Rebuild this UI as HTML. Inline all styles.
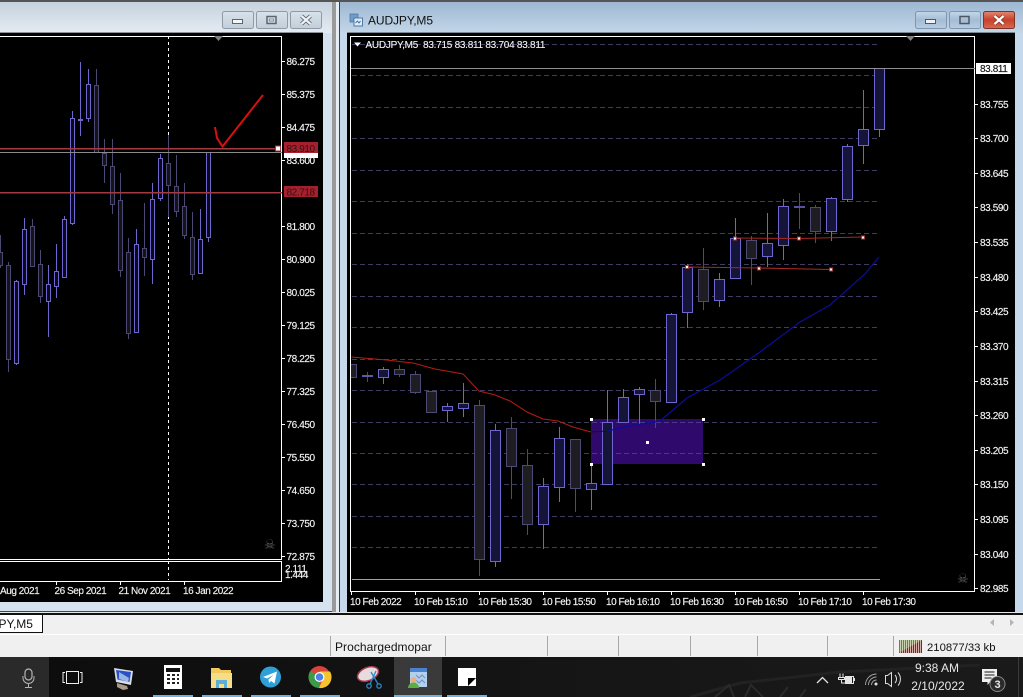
<!DOCTYPE html>
<html><head><meta charset="utf-8"><style>
html,body{margin:0;padding:0;background:#000;width:1023px;height:697px;overflow:hidden}
svg{display:block}
text{font-family:"Liberation Sans",sans-serif}
.a{font-size:10px;fill:#f4f4f4;letter-spacing:-.4px;stroke:#f4f4f4;stroke-width:.15}
.t{font-size:10px;fill:#f4f4f4;letter-spacing:-.45px;stroke:#f4f4f4;stroke-width:.15}
</style></head><body>
<svg width="1023" height="697" viewBox="0 0 1023 697" xmlns="http://www.w3.org/2000/svg">
<defs>
<linearGradient id="g1" x1="0" y1="0" x2="0" y2="1"><stop offset="0" stop-color="#c6d2de"/><stop offset="1" stop-color="#e4ebf2"/></linearGradient>
<linearGradient id="g2" x1="0" y1="0" x2="0" y2="1"><stop offset="0" stop-color="#9db7d2"/><stop offset="1" stop-color="#c4d6e9"/></linearGradient>
<linearGradient id="b1" x1="0" y1="0" x2="0" y2="1"><stop offset="0" stop-color="#d8e2ea"/><stop offset="1" stop-color="#c2ced9"/></linearGradient>
<linearGradient id="b2" x1="0" y1="0" x2="0" y2="1"><stop offset="0" stop-color="#c4d7ea"/><stop offset=".5" stop-color="#a4bcd4"/><stop offset="1" stop-color="#b8cde2"/></linearGradient>
<linearGradient id="b3" x1="0" y1="0" x2="0" y2="1"><stop offset="0" stop-color="#e08a74"/><stop offset=".5" stop-color="#c8402a"/><stop offset="1" stop-color="#d86a50"/></linearGradient>
<linearGradient id="tb" x1="0" y1="0" x2="1" y2="0"><stop offset="0" stop-color="#0c0c0c"/><stop offset=".6" stop-color="#161616"/><stop offset="1" stop-color="#1a1a1a"/></linearGradient>
<clipPath id="cl"><rect x="0" y="36" width="282" height="524"/></clipPath>
<clipPath id="cr"><rect x="351" y="36" width="624" height="556"/></clipPath>
</defs>

<!-- screen background -->
<rect width="1023" height="697" fill="#d6e4f2"/>
<rect width="1023" height="2" fill="#555"/>

<!-- LEFT WINDOW -->
<rect x="0" y="2" width="332" height="31" fill="url(#g1)"/>
<rect x="0" y="32" width="323" height="1" fill="#8c9298"/>
<rect x="0" y="33" width="323" height="569" fill="#000"/>
<rect x="323" y="33" width="9" height="579" fill="#d5e3f0"/>
<rect x="0" y="602" width="332" height="9" fill="#d5e3f0"/>
<rect x="0" y="611" width="336" height="1" fill="#444"/>
<rect x="332" y="2" width="4" height="610" fill="#9a9a9a"/>
<rect x="336" y="2" width="3" height="610" fill="#e6edf4"/>
<rect x="339" y="2" width="1" height="610" fill="#3c3c3c"/>
<g stroke="#8f9aa6" fill="url(#b1)">
<rect x="222.5" y="11.5" width="31" height="17" rx="2"/>
<rect x="256.5" y="11.5" width="31" height="17" rx="2"/>
<rect x="290.5" y="11.5" width="31" height="17" rx="2"/>
</g>
<rect x="232.5" y="19.5" width="10" height="4" fill="#f4f6f8" stroke="#5c6670"/>
<rect x="267" y="16.5" width="9" height="7" fill="none" stroke="#5c6670" stroke-width="1.5"/>
<rect x="269.5" y="19" width="4" height="2" fill="#e8edf2" stroke="#5c6670" stroke-width=".6"/>
<path d="M301.5 16l9 8M310.5 16l-9 8" stroke="#5c6670" stroke-width="4"/>
<path d="M301.5 16l9 8M310.5 16l-9 8" stroke="#eef2f6" stroke-width="2.2"/>

<!-- left chart frame -->
<path d="M0 36.5H281.5V559.5H0M0 561.5H281.5V581.5H0" fill="none" stroke="#fff"/>
<g clip-path="url(#cl)">
<path d="M168.5 36V560" stroke="#fff" stroke-dasharray="3 3"/>
<path d="M.5 235V268M8.5 262V372M32.5 219V267M40.5 250V303M96.5 69V152M104.5 139V183M112.5 139V214M120.5 173V277M128.5 238V339M144.5 203V276M168.5 135V217M176.5 155V217M184.5 183V239M192.5 212V280" stroke="#4c4874" fill="none"/>
<path d="M16.5 280V365M24.5 218V295M48.5 265V337M56.5 244V298M64.5 216V277M72.5 111V225M80.5 62V136M88.5 69V122M136.5 229V333M152.5 183V284M160.5 154V201M200.5 209V274M208.5 152V242" stroke="#6e66cc" fill="none"/>
<path d="M0 252.5H2.5V265.5H0M6.5 265.5h4v94h-4zM30.5 226.5h4v40h-4zM38.5 264.5h4v32h-4zM94.5 85.5h4v67h-4zM102.5 153.5h4v12h-4zM110.5 166.5h4v38h-4zM118.5 200.5h4v70h-4zM126.5 252.5h4v81h-4zM142.5 248.5h4v9h-4zM166.5 163.5h4v22h-4zM174.5 186.5h4v25h-4zM182.5 206.5h4v29h-4zM190.5 237.5h4v37h-4z" fill="#141418" stroke="#4c4874"/>
<path d="M14.5 281.5h4v82h-4zM22.5 229.5h4v55h-4zM46.5 284.5h4v17h-4zM54.5 271.5h4v15h-4zM62.5 219.5h4v58h-4zM70.5 118.5h4v105h-4zM86.5 84.5h4v34h-4zM134.5 244.5h4v88h-4zM150.5 199.5h4v60h-4zM158.5 158.5h4v40h-4zM198.5 239.5h4v34h-4zM206.5 152.5h4v85h-4z" fill="#0a0a18" stroke="#6e66cc"/>
<rect x="78" y="119" width="5" height="2" fill="#6e66cc"/>
</g>
<path d="M168.5 561V580" stroke="#fff" stroke-dasharray="3 3"/>
<rect x="0" y="148" width="278" height="1.5" fill="#a33a40"/>
<rect x="0" y="152" width="282" height="1" fill="#8a8a8a"/>
<rect x="0" y="192" width="282" height="1.5" fill="#a33a40"/>
<rect x="275.5" y="146" width="5" height="5" fill="#fff" stroke="#a33a40"/>
<path d="M215 127L217 138L222.5 146.5L263 95" fill="none" stroke="#d81010" stroke-width="2"/>
<path d="M214 36h9l-4.500 5z" fill="#808080"/>
<text x="264" y="549" style="font-family:'DejaVu Sans',sans-serif;font-size:13px" fill="#5e5e5e">☠</text>
<path d="M282 61.500h3M282 94.500h3M282 127.500h3M282 160.500h3M282 226.500h3M282 259.500h3M282 292.500h3M282 325.500h3M282 358.500h3M282 391.500h3M282 424.500h3M282 457.500h3M282 490.500h3M282 523.500h3M282 556.500h3M56.500 582v3M120.500 582v3M184.500 582v3" stroke="#fff"/>
<g class="a">
<text class="a" x="286.500" y="65">86.275</text><text class="a" x="286.500" y="98">85.375</text><text class="a" x="286.500" y="131">84.475</text>
<text class="a" x="286.500" y="164">83.600</text><text class="a" x="286.500" y="230">81.800</text><text class="a" x="286.500" y="263">80.900</text>
<text class="a" x="286.500" y="296">80.025</text><text class="a" x="286.500" y="329">79.125</text><text class="a" x="286.500" y="362">78.225</text>
<text class="a" x="286.500" y="395">77.325</text><text class="a" x="286.500" y="428">76.450</text><text class="a" x="286.500" y="461">75.550</text>
<text class="a" x="286.500" y="494">74.650</text><text class="a" x="286.500" y="527">73.750</text><text class="a" x="286.500" y="560">72.875</text>
<text class="a" x="285" y="572">2.111</text><text class="a" x="285" y="578">1.444</text>
</g>
<rect x="284" y="153" width="34" height="5" fill="#fff"/>
<rect x="284" y="142" width="34" height="11" fill="#a3202c"/>
<rect x="284" y="186" width="34" height="11" fill="#a3202c"/>
<text class="a" x="286.500" y="152" style="fill:#3a0f12;stroke:none">83.910</text>
<text class="a" x="286.500" y="195.500" style="fill:#3a0f12;stroke:none">82.718</text>
<text class="t" x="0" y="594">Aug 2021</text><text class="t" x="54.500" y="594">26 Sep 2021</text><text class="t" x="118.500" y="594">21 Nov 2021</text><text class="t" x="183" y="594">16 Jan 2022</text>

<!-- RIGHT WINDOW -->
<rect x="340" y="2" width="683" height="31" fill="url(#g2)"/>
<rect x="340" y="33" width="7" height="579" fill="#c6d9ec"/>
<rect x="347" y="32" width="668" height="1" fill="#7c8894"/>
<rect x="347" y="33" width="668" height="579" fill="#000"/>
<rect x="1015" y="33" width="8" height="579" fill="#c6d9ec"/>
<g stroke="#7f96ad">
<rect x="915.500" y="11.500" width="31" height="17" rx="2" fill="url(#b2)"/>
<rect x="949.500" y="11.500" width="31" height="17" rx="2" fill="url(#b2)"/>
</g>
<rect x="983.500" y="11.500" width="31" height="17" rx="2" fill="url(#b3)" stroke="#7c3528"/>
<rect x="925.500" y="19.500" width="10" height="4" fill="#eef2f6" stroke="#4c5866"/>
<rect x="960" y="16.500" width="9" height="7" fill="none" stroke="#4c5866" stroke-width="1.500"/>
<path d="M994.500 16l9 8M1003.500 16l-9 8" stroke="#8a3a2c" stroke-width="4"/>
<path d="M994.500 16l9 8M1003.500 16l-9 8" stroke="#fff" stroke-width="2.200"/>
<!-- window icon -->
<rect x="350" y="14" width="8" height="8" fill="#6f9bc8" stroke="#4d7aa8" stroke-width=".8"/>
<rect x="354" y="18" width="8.500" height="8" fill="#dfeaf5" stroke="#4d7aa8"/>
<path d="M355.500 23l2-2 1.500 2 1.500-2" stroke="#2a5a8c" fill="none" stroke-width=".8"/>
<text x="368" y="24.500" style="font-size:12px;letter-spacing:-.1px" fill="#111">AUDJPY,M5</text>

<!-- right chart -->
<rect x="350.500" y="36.500" width="624" height="555" fill="#000" stroke="#fff"/>
<path d="M352 44.500H880M352 75.500H880M352 107.500H880M352 138.500H880M352 170.500H880M352 201.500H880M352 233.500H880M352 264.500H880M352 296.500H880M352 327.500H880M352 359.500H880M352 390.500H880M352 422.500H880M352 453.500H880M352 484.500H880M352 516.500H880M352 547.500H880" stroke="#3f3c5e" stroke-dasharray="5 3"/>
<rect x="591" y="419" width="112" height="45" fill="#2f0a6c"/>
<path d="M592 422.500H703M592 453.500H703" stroke="#4b3a86" stroke-dasharray="5 3"/>
<g clip-path="url(#cr)">
<path d="M351.500 364V377M399.500 365V377M415.500 371V394M431.500 391V412M479.500 400V576M511.500 417V499M527.500 449V535M575.500 439V512M655.500 379V428M703.500 248V310M751.500 236V285M799.500 193V229M815.500 205V243M367.500 372V382" stroke="#4e4a76" fill="none"/>
<path d="M383.500 367V384M447.500 403V422M463.500 383V417M495.500 424V567M543.500 478V549M559.500 427V502M591.500 464V510M607.500 390V484M623.500 389V423M639.500 387V424M671.500 313V403M687.500 264V328M719.500 273V307M735.500 218V279M767.500 213V267M783.500 199V260M831.500 197V241M847.500 144V202M863.500 90V164M879.500 68V137" stroke="#6e66cc" fill="none"/>
<path d="M351 364.500H356.500V377.500H351M394.500 369.500h10v5h-10zM410.500 374.500h10v18h-10zM426.500 391.500h10v21h-10zM474.500 405.500h10v154h-10zM506.500 428.500h10v38h-10zM522.500 465.500h10v59h-10zM570.500 439.500h10v49h-10zM650.500 390.500h10v11h-10zM698.500 269.500h10v32h-10zM746.500 240.500h10v18h-10zM810.500 207.500h10v24h-10z" fill="#1d1d22" stroke="#4e4a76"/>
<path d="M378.500 369.500h10v8h-10zM442.500 406.500h10v4h-10zM458.500 403.500h10v5h-10zM490.500 430.500h10v131h-10zM538.500 486.500h10v38h-10zM554.500 438.500h10v49h-10zM586.500 483.500h10v6h-10zM602.500 422.500h10v62h-10zM618.500 397.500h10v25h-10zM634.500 389.500h10v5h-10zM666.500 314.500h10v88h-10zM682.500 267.500h10v45h-10zM714.500 279.500h10v21h-10zM730.500 238.500h10v40h-10zM762.500 243.500h10v13h-10zM778.500 206.500h10v39h-10zM826.500 198.500h10v33h-10zM842.500 146.500h10v53h-10zM858.500 129.500h10v16h-10zM874.500 68.500h10v61h-10z" fill="#15153a" stroke="#6e66cc"/>
<rect x="362" y="375" width="11" height="2" fill="#6258a8"/><rect x="794" y="206" width="11" height="2" fill="#5850a0"/>
</g>
<polyline points="351.500,357 386.500,360 413,363 435,369 463,374 479,391 495,395 510,401 527,412 543,419 558,421 573,427 591,432" fill="none" stroke="#b81c14"/>
<polyline points="591,432 607,431" fill="none" stroke="#151515"/>
<polyline points="607,431 630,426 660,421 687,398 720,380 760,352 800,322 830,305 865,274 879,257" fill="none" stroke="#0c0c9c" stroke-width="1.200"/>
<polyline points="687,267 759,268 831,269.500" fill="none" stroke="#a82822"/>
<polyline points="735,238 799,238.500 863,237" fill="none" stroke="#a82822"/>
<g fill="#fff" stroke="#a83a3a">
<rect x="685.500" y="265.500" width="3" height="3"/><rect x="757.500" y="267" width="3" height="3"/><rect x="829.500" y="268" width="3" height="3"/>
<rect x="733.500" y="237" width="3" height="3"/><rect x="797.500" y="237" width="3" height="3"/><rect x="861.500" y="236" width="3" height="3"/>
</g>
<g fill="#fff"><rect x="590" y="418" width="3" height="3"/><rect x="702" y="418" width="3" height="3"/><rect x="590" y="463" width="3" height="3"/><rect x="702" y="463" width="3" height="3"/><rect x="646" y="441" width="3" height="3"/></g>
<rect x="351" y="68" width="624" height="1" fill="#8e8e8e"/>
<rect x="352" y="579" width="528" height="1" fill="#c89868"/>
<path d="M906 36h9l-4.500 5z" fill="#808080"/>
<path d="M354 42.500h7l-3.500 4z" fill="#fff"/>
<text x="365.500" y="48" style="font-size:10px;letter-spacing:-.26px;stroke:#f4f4f4;stroke-width:.12" fill="#f4f4f4" xml:space="preserve">AUDJPY,M5  83.715 83.811 83.704 83.811</text>
<text x="957" y="583" style="font-family:'DejaVu Sans',sans-serif;font-size:13px" fill="#5e5e5e">☠</text>
<path d="M975 104.500h3M975 138.500h3M975 173.500h3M975 207.500h3M975 242.500h3M975 277.500h3M975 311.500h3M975 346.500h3M975 381.500h3M975 415.500h3M975 450.500h3M975 484.500h3M975 519.500h3M975 554.500h3M975 588.500h3M351.500 592v3M415.500 592v3M479.500 592v3M543.500 592v3M607.500 592v3M671.500 592v3M735.500 592v3M799.500 592v3M863.500 592v3" stroke="#fff"/>
<rect x="976" y="63" width="35" height="11" fill="#fff"/>
<text class="a" x="980" y="72" style="fill:#111;stroke:#111">83.811</text>
<text class="a" x="980" y="108">83.755</text><text class="a" x="980" y="142">83.700</text><text class="a" x="980" y="177">83.645</text>
<text class="a" x="980" y="211">83.590</text><text class="a" x="980" y="246">83.535</text><text class="a" x="980" y="281">83.480</text>
<text class="a" x="980" y="315">83.425</text><text class="a" x="980" y="350">83.370</text><text class="a" x="980" y="385">83.315</text>
<text class="a" x="980" y="419">83.260</text><text class="a" x="980" y="454">83.205</text><text class="a" x="980" y="488">83.150</text>
<text class="a" x="980" y="523">83.095</text><text class="a" x="980" y="558">83.040</text><text class="a" x="980" y="592">82.985</text>
<text class="t" x="350" y="605">10 Feb 2022</text><text class="t" x="414" y="605">10 Feb 15:10</text><text class="t" x="478" y="605">10 Feb 15:30</text>
<text class="t" x="542" y="605">10 Feb 15:50</text><text class="t" x="606" y="605">10 Feb 16:10</text><text class="t" x="670" y="605">10 Feb 16:30</text>
<text class="t" x="734" y="605">10 Feb 16:50</text><text class="t" x="798" y="605">10 Feb 17:10</text><text class="t" x="862" y="605">10 Feb 17:30</text>

<!-- tab bar -->
<rect x="0" y="612" width="1023" height="1" fill="#e8e8e8"/>
<rect x="0" y="613" width="1023" height="2" fill="#111"/>
<rect x="0" y="615" width="1023" height="19" fill="#f0f0f0"/>
<rect x="-1" y="614.500" width="43.500" height="18" fill="#fff" stroke="#111"/>
<text x="-1.500" y="628" style="font-size:12px" fill="#111">PY,M5</text>
<path d="M994 619v7l-4-3.500zM1010 619v7l4-3.500z" fill="#b4b4b4"/>
<rect x="0" y="634" width="1023" height="1" fill="#fff"/>
<rect x="0" y="635" width="1023" height="22" fill="#f0f0f0"/>
<path d="M330.500 636v20M445.500 636v20M547.500 636v20M618.500 636v20M690.500 636v20M757.500 636v20M827.500 636v20M893.500 636v20" stroke="#a8a8a8"/>
<text x="335" y="651" style="font-size:12px;letter-spacing:.05px" fill="#111">Prochargedmopar</text>
<path d="M899 640h23v13h-23z" fill="#6c8a1c"/>
<path d="M899 653L922 640V653z" fill="#a01808"/>
<path d="M900.500 640v13M902.500 640v13M904.500 640v13M906.500 640v13M908.500 640v13M910.500 640v13M912.500 640v13M914.500 640v13M916.500 640v13M918.500 640v13M920.500 640v13" stroke="#f0f0f0" stroke-width=".7"/>
<text x="927" y="651" style="font-size:11.300px" fill="#111">210877/33 kb</text>

<!-- TASKBAR -->
<rect x="0" y="657" width="1023" height="40" fill="url(#tb)"/>
<rect x="0" y="657" width="49" height="40" fill="#2a2a2a"/>
<path d="M690 697L740 683L840 672L980 665" stroke="#222" stroke-width="3" fill="none"/>
<path d="M715 697l14-12 5 12M745 697l6-12 12 12M780 697l8-10M800 697l6-8" stroke="#2a2a2a" stroke-width="2" fill="none"/>
<rect x="394" y="657" width="48" height="40" fill="#3a3a3a"/>
<g fill="#76b0d8"><rect x="153" y="695" width="40" height="2"/><rect x="202" y="695" width="40" height="2"/><rect x="251" y="695" width="40" height="2"/><rect x="300" y="695" width="40" height="2"/><rect x="394" y="695" width="48" height="2"/><rect x="447" y="695" width="40" height="2"/></g>
<!-- mic -->
<rect x="25" y="669" width="7" height="11" rx="3.500" fill="none" stroke="#b4b4b4" stroke-width="1.200"/>
<path d="M23 676v2a5.500 5.500 0 0 0 11 0v-2M28.500 684v3M25 687.500h7" fill="none" stroke="#b4b4b4"/>
<!-- task view -->
<rect x="66.500" y="671.500" width="12" height="12" fill="none" stroke="#eee"/>
<path d="M65 672.500h-2v10h2M80 672.500h2v10h-2" fill="none" stroke="#eee"/>
<!-- monitor icon -->
<path d="M114 668l19 3-2 14-15-3z" fill="#d8dce4"/>
<path d="M116 670l15 2-1.500 10-12-2.500z" fill="#2a52c8"/>
<path d="M119 672l10 6-1 4-9-3z" fill="#9ab4e4"/>
<path d="M117 683l10 3 1 3-5 1-6-3z" fill="#a89a84"/>
<!-- calculator -->
<rect x="164" y="665" width="18" height="24" fill="#fff"/>
<rect x="166" y="668" width="14" height="4" fill="#111"/>
<path d="M167 675h3M172 675h3M177 675h2M167 679h3M172 679h3M177 679h2M167 683h3M172 683h3M177 683h2" stroke="#222" stroke-width="2"/>
<!-- folder -->
<path d="M211 668h8l2 2h10v18h-20z" fill="#f1c95c"/>
<rect x="211" y="673" width="21" height="15" fill="#f6dd88"/>
<rect x="216" y="680" width="11" height="8" fill="#5cb0d8"/>
<rect x="219" y="684" width="5" height="4" fill="#f6dd88"/>
<!-- telegram -->
<circle cx="270.500" cy="677" r="10.500" fill="#2f9fd8"/>
<path d="M263 677l14-5.500-2.500 12-3.500-2.500-2 2-.5-3.500 5-4.500-6.500 3.500z" fill="#fff"/>
<!-- chrome -->
<circle cx="319.500" cy="677" r="11" fill="#d8443a"/>
<path d="M319.500 677L310 682.500A11 11 0 0 0 319.500 688z" fill="#3c9a48"/>
<path d="M310 671.500A11 11 0 0 0 316 687.500L324 677z" fill="#3c9a48"/>
<path d="M319.500 671.500H330A11 11 0 0 1 319 688L324 677z" fill="#f4c430"/>
<circle cx="319.500" cy="677" r="5" fill="#fff"/><circle cx="319.500" cy="677" r="3.800" fill="#4a80e8"/>
<!-- snip -->
<ellipse cx="368" cy="674" rx="11" ry="6.500" fill="#e6dcde" stroke="#a83a50" stroke-width="1.500" transform="rotate(-22 368 674)"/>
<path d="M371 672l7 12M376 671l-6 13" stroke="#2a88c8" stroke-width="1.300"/>
<circle cx="369" cy="686" r="2.200" fill="none" stroke="#2a88c8" stroke-width="1.300"/><circle cx="379" cy="686" r="2.200" fill="none" stroke="#2a88c8" stroke-width="1.300"/>
<!-- mt4 -->
<rect x="410" y="668" width="17" height="19" fill="#b4cfec"/>
<rect x="410" y="668" width="17" height="4" fill="#4a82d0"/>
<path d="M416 675l3 3 3-3 3 3M416 680l3 3 3-3 3 3" stroke="#6a90c8" fill="none"/>
<circle cx="413.500" cy="680" r="3" fill="#e8b080"/>
<path d="M408 688a5.500 5.500 0 0 1 11 0z" fill="#58b040"/>
<!-- sticky -->
<rect x="458" y="668" width="18" height="18" fill="#fff"/>
<path d="M468 678h8l-8 8z" fill="#000"/>
<!-- tray -->
<path d="M817 683l5.500-5.500 5.500 5.500" fill="none" stroke="#e4e4e4" stroke-width="1.300"/>
<path d="M840 673.500v4M843 673.500v4M838.500 677.500h6v2h-6zM841.500 680v3h5" stroke="#e4e4e4" fill="none"/>
<rect x="845.500" y="676.500" width="8" height="7" fill="none" stroke="#e4e4e4"/><rect x="846" y="677" width="6" height="6" fill="#e4e4e4"/><rect x="854" y="678" width="1" height="3" fill="#e4e4e4"/>
<path d="M865.500 685a11 11 0 0 1 11-11M868.500 685a8 8 0 0 1 8-8M871.500 685a5 5 0 0 1 5-5" fill="none" stroke="#a8a8a8" stroke-width=".9"/>
<circle cx="876" cy="684" r="1.500" fill="#e4e4e4"/>
<path d="M885.500 675.500h2l4-3v14l-4-3h-2z" fill="none" stroke="#dcdcdc"/>
<path d="M895 675a6 6 0 0 1 0 8M898 672.500a10 10 0 0 1 0 13" fill="none" stroke="#dcdcdc"/>
<text x="937" y="672" text-anchor="middle" style="font-size:12px" fill="#e8e8e8">9:38 AM</text>
<text x="938" y="690" text-anchor="middle" style="font-size:12px" fill="#e8e8e8">2/10/2022</text>
<path d="M982 669h15v13h-7l-2.500 3v-3H982z" fill="#f0f0f0"/>
<path d="M984.500 672h10M984.500 675h10M984.500 678h7" stroke="#1a1a1a"/>
<circle cx="997.500" cy="684" r="7.500" fill="#2a2a2a" stroke="#888"/>
<text x="997.500" y="688" text-anchor="middle" style="font-size:11px;font-weight:bold" fill="#e8e8e8">3</text>
<rect x="1018" y="657" width="1" height="40" fill="#3a3a3a"/>
</svg>
</body></html>
